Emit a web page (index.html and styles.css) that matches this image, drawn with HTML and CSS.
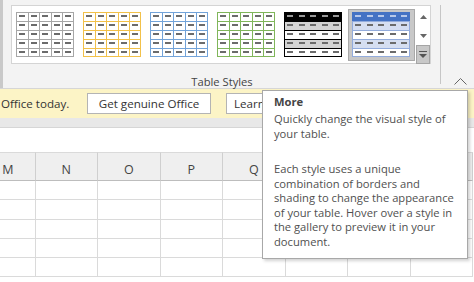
FILE: index.html
```html
<!DOCTYPE html>
<html>
<head>
<meta charset="utf-8">
<link rel="stylesheet" href="styles.css">
</head>
<body>
<svg class="defs" width="0" height="0" aria-hidden="true">
  <symbol id="dh" viewBox="0 0 58 45">
    <rect x="3" y="3" width="6" height="2"/><rect x="15" y="3" width="6" height="2"/><rect x="26" y="3" width="6" height="2"/><rect x="38" y="3" width="6" height="2"/><rect x="49" y="3" width="6" height="2"/>
  </symbol>
  <symbol id="db" viewBox="0 0 58 45">
    <rect x="3" y="12" width="6" height="2"/><rect x="15" y="12" width="6" height="2"/><rect x="26" y="12" width="6" height="2"/><rect x="38" y="12" width="6" height="2"/><rect x="49" y="12" width="6" height="2"/>
    <rect x="3" y="21" width="6" height="2"/><rect x="15" y="21" width="6" height="2"/><rect x="26" y="21" width="6" height="2"/><rect x="38" y="21" width="6" height="2"/><rect x="49" y="21" width="6" height="2"/>
    <rect x="3" y="30" width="6" height="2"/><rect x="15" y="30" width="6" height="2"/><rect x="26" y="30" width="6" height="2"/><rect x="38" y="30" width="6" height="2"/><rect x="49" y="30" width="6" height="2"/>
    <rect x="3" y="39" width="6" height="2"/><rect x="15" y="39" width="6" height="2"/><rect x="26" y="39" width="6" height="2"/><rect x="38" y="39" width="6" height="2"/><rect x="49" y="39" width="6" height="2"/>
  </symbol>
  <symbol id="grid" viewBox="0 0 58 45">
    <path d="M0.5 0V45M12.5 0V45M23.5 0V45M35.5 0V45M46.5 0V45M57.5 0V45M0 0.5H58M0 9.5H58M0 18.5H58M0 27.5H58M0 36.5H58M0 44.5H58" stroke="currentColor" fill="none"/>
  </symbol>
  <symbol id="hlines" viewBox="0 0 58 45">
    <path d="M0.5 0V45M57.5 0V45M0 0.5H58M0 9.5H58M0 18.5H58M0 27.5H58M0 36.5H58M0 44.5H58" stroke="currentColor" fill="none"/>
  </symbol>
</svg>

<div class="ribbon">
  <div class="edge"></div>
  <div class="group">
    <div class="gallery">
      <div class="items">
        <svg class="thumb t-plain" width="58" height="45"><rect width="58" height="45" fill="#fff"/><use href="#grid" class="ln"/><use href="#dh" class="dd"/><use href="#db" class="dd"/></svg>
        <svg class="thumb t-gold" width="58" height="45"><rect width="58" height="45" fill="#fff"/><use href="#grid" class="ln"/><use href="#dh" class="dd"/><use href="#db" class="dd"/></svg>
        <svg class="thumb t-blue" width="58" height="45"><rect width="58" height="45" fill="#fff"/><use href="#grid" class="ln"/><use href="#dh" class="dd"/><use href="#db" class="dd"/></svg>
        <svg class="thumb t-green" width="58" height="45"><rect width="58" height="45" fill="#fff"/><use href="#grid" class="ln"/><use href="#dh" class="dd"/><use href="#db" class="dd"/></svg>
        <svg class="thumb t-dark" width="58" height="45"><rect width="58" height="45" fill="#fff"/><rect y="0" width="58" height="9" fill="#000"/><rect y="9" width="58" height="9" fill="#d4d4d4"/><rect y="27" width="58" height="9" fill="#d4d4d4"/><use href="#hlines" class="ln"/><use href="#dh" class="dh"/><use href="#db" class="dd"/></svg>
        <div class="selected">
          <svg class="thumb t-accent" width="58" height="45"><rect width="58" height="45" fill="#fff"/><rect y="9" width="58" height="9" fill="#d5def1"/><rect y="27" width="58" height="9" fill="#d5def1"/><use href="#hlines" class="ln"/><rect y="0" width="58" height="9" fill="#4472c4"/><use href="#dh" class="dh"/><use href="#db" class="dd"/></svg>
        </div>
      </div>
      <div class="scroll">
        <div class="sbtn"><svg width="7" height="4"><path d="M0 4L3.5 0L7 4Z" fill="#666"/></svg></div>
        <div class="sbtn"><svg width="7" height="4"><path d="M0 0L3.5 4L7 0Z" fill="#666"/></svg></div>
        <div class="sbtn more"><svg width="8" height="7"><path d="M0 0.5H8" stroke="#555" fill="none"/><path d="M0 3L4 7L8 3Z" fill="#555"/></svg></div>
      </div>
    </div>
    <div class="label">Table Styles</div>
  </div>
  <div class="sep"></div>
  <div class="collapse"><svg width="13" height="8"><path d="M0.5 7.5L6.5 1.5L12.5 7.5" stroke="#666" fill="none"/></svg></div>
</div>

<div class="msgbar">
  <span class="msgtext">Office today.</span>
  <span class="mbtn btn-genuine">Get genuine Office</span>
  <span class="mbtn btn-learn">Learn more</span>
</div>

<div class="band"></div>
<div class="formula"></div>

<div class="sheet">
  <div class="hdr first">M</div><div class="hdr">N</div><div class="hdr">O</div><div class="hdr">P</div><div class="hdr">Q</div><div class="hdr"></div><div class="hdr"></div><div class="hdr"></div>
  <div class="c"></div><div class="c"></div><div class="c"></div><div class="c"></div><div class="c"></div><div class="c"></div><div class="c"></div><div class="c"></div>
  <div class="c"></div><div class="c"></div><div class="c"></div><div class="c"></div><div class="c"></div><div class="c"></div><div class="c"></div><div class="c"></div>
  <div class="c"></div><div class="c"></div><div class="c"></div><div class="c"></div><div class="c"></div><div class="c"></div><div class="c"></div><div class="c"></div>
  <div class="c"></div><div class="c"></div><div class="c"></div><div class="c"></div><div class="c"></div><div class="c"></div><div class="c"></div><div class="c"></div>
  <div class="c"></div><div class="c"></div><div class="c"></div><div class="c"></div><div class="c"></div><div class="c"></div><div class="c"></div><div class="c"></div>
</div>

<div class="tooltip">
  <div class="tt-title">More</div>
  <p>Quickly change the visual style of your table.</p>
  <p>Each style uses a unique combination of borders and shading to change the appearance of your table. Hover over a style in the gallery to preview it in your document.</p>
</div>
</body>
</html>
```

FILE: styles.css
```css
* { box-sizing: border-box; }
html, body { margin: 0; padding: 0; }
body {
  width: 474px;
  height: 282px;
  overflow: hidden;
  position: relative;
  background: #fff;
  font-family: "Open Sans", "Noto Sans", sans-serif;
  color: #333;
}
.defs { position: absolute; width: 0; height: 0; overflow: hidden; }

.ribbon {
  display: flex;
  height: 89px;
  background: #f3f3f3;
  border-bottom: 1px solid #d6d6d6;
}
.edge { width: 3px; background: #c9c9c9; }
.group {
  width: 437px;
  display: flex;
  flex-direction: column;
}
.gallery {
  margin: 5px 0 0 8px;
  width: 420px;
  height: 59px;
  border: 1px solid #d4d4d4;
  background: #fff;
  display: flex;
}
.items {
  flex: 1;
  display: flex;
  align-items: flex-start;
  gap: 9px;
  padding: 6px 0 0 4px;
}
.thumb { display: block; flex: none; }
.selected {
  margin: -3px 0 0 -3px;
  padding: 2px 4px 3px 3px;
  background: #c8c8c8;
  border: 1px solid #a9a9a9;
}
.t-plain .ln { color: #a6a6a6; }
.t-gold .ln { color: #f2c14a; }
.t-blue .ln { color: #72a3d9; }
.t-green .ln { color: #80b65a; }
.t-dark .ln { color: #000; }
.t-accent .ln { color: #93acdc; }
.dd { fill: #6b6b6b; }
.t-dark .dh { fill: #9a9a9a; }
.t-accent .dh { fill: #b7c8ea; }

.scroll {
  width: 14px;
  display: flex;
  flex-direction: column;
  margin: 0 0 -1px 0;
}
.sbtn {
  height: 20px;
  display: flex;
  align-items: center;
  justify-content: center;
}
.sbtn:first-child { padding-top: 3px; }
.sbtn svg { display: block; }
.more {
  height: 19px;
  background: #c8c8c8;
  border: 1px solid #a5a5a5;
}
.label {
  margin-top: 10px;
  text-align: center;
  font-size: 11.2px;
  line-height: 16px;
  color: #444;
  padding-left: 1px;
}
.sep {
  width: 1px;
  margin: 5px 0 4px 0;
  background: #c6c6c6;
}
.collapse {
  flex: 1;
  display: flex;
  align-items: flex-end;
  justify-content: flex-end;
  padding: 0 7px 3px 0;
}
.collapse svg { display: block; }

.msgbar {
  height: 29px;
  background: #fcf4c6;
  display: flex;
  align-items: center;
  font-size: 11.6px;
  color: #333;
  white-space: nowrap;
  overflow: hidden;
}
.msgtext { margin-left: 1px; width: 86px; }
.mbtn {
  height: 21px;
  border: 1px solid #b4b4b4;
  background: #fff;
  display: flex;
  align-items: center;
  justify-content: center;
}
.btn-genuine { width: 124px; }
.btn-learn { width: 100px; margin-left: 15px; justify-content: flex-start; padding-left: 7px; }

.band { height: 10px; background: #e8e8e8; border-bottom: 1px solid #d6d6d6; }
.formula { height: 24px; background: #fff; }

.sheet {
  display: grid;
  grid-template-columns: repeat(8, 62.5px);
  grid-template-rows: 29px repeat(5, 19.3px);
  margin-left: -27px;
}
.hdr {
  background: #efefef;
  border-top: 1px solid #dadada;
  border-right: 1px solid #cfcfcf;
  border-bottom: 1px solid #bdbdbd;
  display: flex;
  align-items: flex-end;
  justify-content: center;
  padding-bottom: 2px;
  font-size: 12.5px;
  color: #444;
}
.hdr.first { padding-left: 8px; }
.c {
  border-right: 1px solid #dadada;
  border-bottom: 1px solid #dadada;
}

.tooltip {
  position: absolute;
  left: 262px;
  top: 90px;
  width: 206px;
  height: 169px;
  background: #fff;
  border: 1px solid #a8a8a8;
  box-shadow: 2px 2px 3px rgba(0, 0, 0, 0.18);
  padding: 3px 8px 0 11px;
  font-size: 11.2px;
  line-height: 14.5px;
  color: #505050;
}
.tt-title {
  font-weight: bold;
  color: #444;
  line-height: 16px;
  margin-bottom: 2px;
}
.tooltip p { margin: 0 0 21px 0; }
```
